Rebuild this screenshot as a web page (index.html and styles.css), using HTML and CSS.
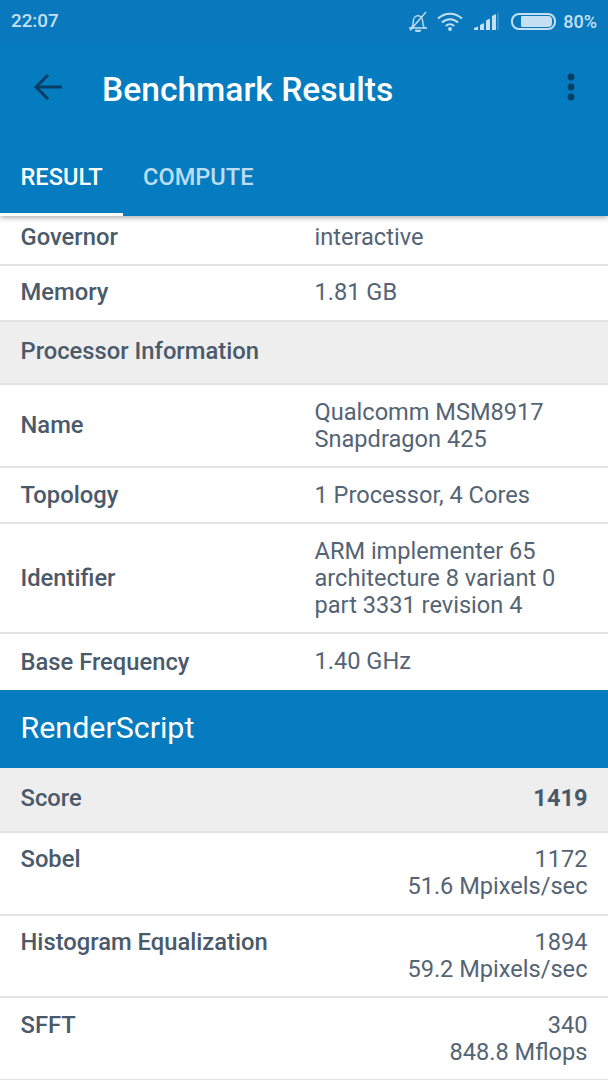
FILE: index.html
```html
<!DOCTYPE html>
<html lang="en">
<head>
<meta charset="utf-8">
<title>Benchmark Results</title>
<link rel="stylesheet" href="styles.css">
</head>
<body>
<div class="screen">
  <header class="appbar">
    <div class="status">
      <span class="clock">22:07</span>
      <div class="status-icons">
        <svg class="ic-bell" width="20" height="21" viewBox="0 0 20 21" fill="none" stroke="#c5e0f3" stroke-width="1.400"><path d="M1 17h18M3.500 17c1.500-2 1.800-3.500 1.800-6.500 0-3.400 2-5.800 4.700-5.800s4.700 2.400 4.700 5.800c0 3 .3 4.500 1.800 6.500"/><path d="M7.500 19c.5 1.200 4.500 1.200 5 0" stroke-width="2"/><path d="M2 19.500 18 1"/></svg>
        <svg class="ic-wifi" width="26" height="20" viewBox="0 0 26 20" fill="none" stroke="#c5e0f3" stroke-width="2"><path d="M1 7.500c7-6.500 17-6.500 24 0M5 11.500c4.800-4.500 11.200-4.500 16 0M8.800 15c2.500-2.300 5.900-2.300 8.400 0"/><circle cx="13" cy="18" r="1.900" fill="#c5e0f3" stroke="none"/></svg>
        <svg class="ic-signal" width="25" height="18" viewBox="0 0 25 18"><path fill="#c5e0f3" d="M0 18v-2l4-1.500V18zM6 18v-5l4-2v7zM12 18V8.500l4-2V18zM18 18V4l4-2v16z"/><path fill="#5fa3d3" d="M23.500 18V1l1-.5V18z"/></svg>
        <div class="battery"><div class="battery-fill"></div></div>
        <span class="pct">80%</span>
      </div>
    </div>
    <div class="toolbar">
      <svg class="ic-back" width="30" height="28" viewBox="0 0 30 28" fill="none" stroke="#063f66" stroke-width="3"><path d="M29 14H3M15 2 3 14l12 12"/></svg>
      <h1 class="title">Benchmark Results</h1>
      <svg class="ic-more" width="10" height="30" viewBox="0 0 10 30" fill="#063f66"><circle cx="5" cy="5" r="3.400"/><circle cx="5" cy="15" r="3.400"/><circle cx="5" cy="25" r="3.400"/></svg>
    </div>
    <nav class="tabs">
      <div class="tab active">RESULT</div>
      <div class="tab">COMPUTE</div>
    </nav>
  </header>
  <main class="content">
    <div class="row first"><div class="key">Governor</div><div class="val">interactive</div></div>
    <div class="row"><div class="key">Memory</div><div class="val">1.81 GB</div></div>
    <div class="row head"><div class="key">Processor Information</div></div>
    <div class="row"><div class="key">Name</div><div class="val">Qualcomm MSM8917<br>Snapdragon 425</div></div>
    <div class="row"><div class="key">Topology</div><div class="val">1 Processor, 4 Cores</div></div>
    <div class="row"><div class="key">Identifier</div><div class="val">ARM implementer 65<br>architecture 8 variant 0<br>part 3331 revision 4</div></div>
    <div class="row last"><div class="key">Base Frequency</div><div class="val">1.40 GHz</div></div>
    <div class="section">RenderScript</div>
    <div class="row head score"><div class="key">Score</div><div class="num strong">1419</div></div>
    <div class="row top"><div class="key">Sobel</div><div class="num">1172<br>51.6 Mpixels/sec</div></div>
    <div class="row top"><div class="key">Histogram Equalization</div><div class="num">1894<br>59.2 Mpixels/sec</div></div>
    <div class="row top"><div class="key">SFFT</div><div class="num">340<br>848.8 Mflops</div></div>
  </main>
</div>
</body>
</html>
```
FILE: styles.css
```css
* { box-sizing: border-box; }
html, body { margin: 0; padding: 0; }
body { width: 608px; height: 1080px; overflow: hidden; background: #fff; font-family: Roboto, "Liberation Sans", sans-serif; }
.screen { height: 1080px; overflow: hidden; display: flex; flex-direction: column; }

.appbar { height: 216px; flex: none; background: #067cc0; color: #fff; display: flex; flex-direction: column; box-shadow: 0 2px 5px rgba(0,0,0,.3); position: relative; z-index: 1; }
.status { height: 42px; flex: none; display: flex; justify-content: space-between; align-items: center; padding: 0 11px; color: #c5e0f3; font-size: 18.800px; font-weight: 500; background: #0a78bd; }
.status-icons { display: flex; align-items: center; }
.pct { font-size: 18px; }
.ic-bell { margin-right: 9px; }
.ic-wifi { margin-right: 11px; }
.ic-signal { margin-right: 12px; }
.battery { width: 45px; height: 17px; border: 2px solid #c5e0f3; border-radius: 8px; padding: 1px; margin-right: 7px; }
.battery-fill { width: 31px; height: 100%; margin-left: 7px; background: #c5e0f3; border-radius: 1px 4px 4px 1px; }
.toolbar { height: 96px; flex: none; display: flex; align-items: center; padding: 0 32px 6px 33px; }
.ic-back { flex: none; }
.title { margin: 6px 0 0 39px; flex: 1; font-size: 33.600px; font-weight: 500; line-height: 40px; color: #fff; }
.tabs { display: flex; height: 78px; flex: none; margin-top: auto; }
.tab { height: 78px; padding: 0 20px; display: flex; align-items: center; font-size: 23.600px; font-weight: 500; color: #bcdcf1; }
.tab.active { width: 123px; padding: 3px 0 0 20.500px; color: #fff; border-bottom: 3px solid #fff; }

.content { flex: 1; overflow: hidden; color: #4a5a6a; font-size: 23.600px; line-height: 26.900px; }
.row { display: flex; padding: 13.400px 20.500px 13.700px 20.500px; border-bottom: 2px solid #e2e2e2; }
.row.first { height: 50px; padding-top: 8px; padding-bottom: 0; align-items: flex-start; }
.row.last { border-bottom: 0; height: 56px; }
.key { width: 294px; flex: none; font-size: 23.750px; font-weight: 500; align-self: center; }
.row.first .key { align-self: flex-start; }
.row.top .key { align-self: flex-start; }
.val { flex: 1; color: #546474; }
.num { flex: 1; text-align: right; color: #546474; }
.num.strong { font-weight: 700; color: #4a5a6a; }
.row.head { background: #eee; padding-top: 16px; padding-bottom: 19px; height: 63.500px; }
.row.score { height: 64.500px; padding-top: 17px; }
.section { height: 78px; background: #067cc0; color: #fff; font-size: 30.400px; display: flex; align-items: center; padding: 0 20.500px 2px; }
```
